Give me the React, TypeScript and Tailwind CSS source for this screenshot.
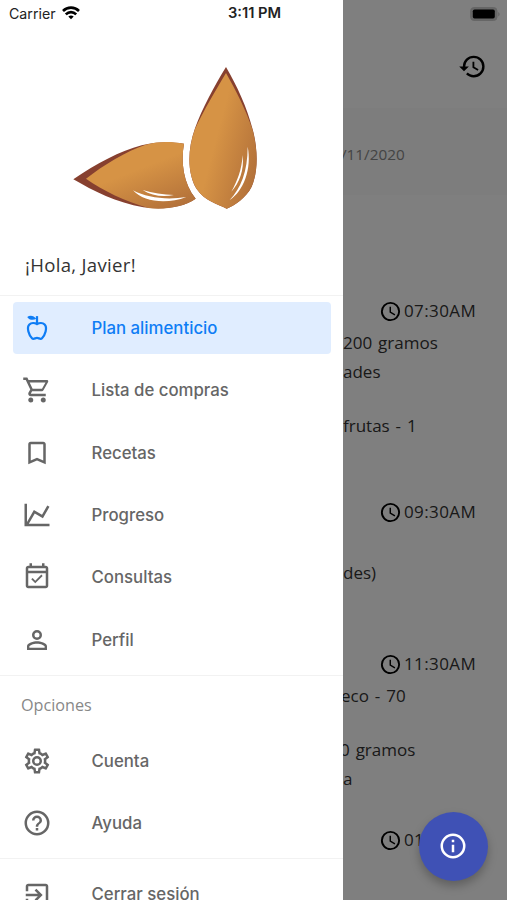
import clsx from "clsx";

const icons = {
  cart: "M17,18A2,2 0 0,1 19,20A2,2 0 0,1 17,22C15.89,22 15,21.1 15,20C15,18.89 15.89,18 17,18M1,2H4.27L5.21,4H20A1,1 0 0,1 21,5C21,5.17 20.95,5.34 20.88,5.5L17.3,11.97C16.96,12.58 16.3,13 15.55,13H8.1L7.2,14.63L7.17,14.75A0.25,0.25 0 0,0 7.42,15H19V17H7C5.89,17 5,16.1 5,15C5,14.65 5.09,14.32 5.24,14.04L6.6,11.59L3,4H1V2M7,18A2,2 0 0,1 9,20A2,2 0 0,1 7,22C5.89,22 5,21.1 5,20C5,18.89 5.89,18 7,18M16,11L18.78,6H6.14L8.5,11H16Z",
  bookmark: "M17,18L12,15.82L7,18V5H17M17,3H7A2,2 0 0,0 5,5V21L12,18L19,21V5C19,3.89 18.1,3 17,3Z",
  chart: "M16,11.78L20.24,4.45L21.97,5.45L16.74,14.5L10.23,10.75L5.46,19H22V21H2V3H4V17.54L9.5,8L16,11.78Z",
  calendar:
    "M19 3H18V1H16V3H8V1H6V3H5C3.9 3 3 3.9 3 5V19C3 20.1 3.9 21 5 21H19C20.1 21 21 20.1 21 19V5C21 3.9 20.1 3 19 3M19 19H5V9H19V19M19 7H5V5H19V7M7.4 13.8L8.5 12.8L10.6 14.9L15.5 10L16.5 11.1L10.6 17L7.4 13.8Z",
  account:
    "M12,4A4,4 0 0,1 16,8A4,4 0 0,1 12,12A4,4 0 0,1 8,8A4,4 0 0,1 12,4M12,6A2,2 0 0,0 10,8A2,2 0 0,0 12,10A2,2 0 0,0 14,8A2,2 0 0,0 12,6M12,13C14.67,13 20,14.33 20,17V20H4V17C4,14.33 9.33,13 12,13M12,14.9C9.03,14.9 5.9,16.36 5.9,17V18.1H18.1V17C18.1,16.36 14.97,14.9 12,14.9Z",
  cog: "M12,8A4,4 0 0,1 16,12A4,4 0 0,1 12,16A4,4 0 0,1 8,12A4,4 0 0,1 12,8M12,10A2,2 0 0,0 10,12A2,2 0 0,0 12,14A2,2 0 0,0 14,12A2,2 0 0,0 12,10M10,22C9.75,22 9.54,21.82 9.5,21.58L9.13,18.93C8.5,18.68 7.96,18.34 7.44,17.94L4.95,18.95C4.73,19.03 4.46,18.95 4.34,18.73L2.34,15.27C2.21,15.05 2.27,14.78 2.46,14.63L4.57,12.97L4.5,12L4.57,11L2.46,9.37C2.27,9.22 2.21,8.95 2.34,8.73L4.34,5.27C4.46,5.05 4.73,4.96 4.95,5.05L7.44,6.05C7.96,5.66 8.5,5.32 9.13,5.07L9.5,2.42C9.54,2.18 9.75,2 10,2H14C14.25,2 14.46,2.18 14.5,2.42L14.87,5.07C15.5,5.32 16.04,5.66 16.56,6.05L19.05,5.05C19.27,4.96 19.54,5.05 19.66,5.27L21.66,8.73C21.79,8.95 21.73,9.22 21.54,9.37L19.43,11L19.5,12L19.43,13L21.54,14.63C21.73,14.78 21.79,15.05 21.66,15.27L19.66,18.73C19.54,18.95 19.27,19.04 19.05,18.95L16.56,17.95C16.04,18.34 15.5,18.68 14.87,18.93L14.5,21.58C14.46,21.82 14.25,22 14,22H10M11.25,4L10.88,6.61C9.68,6.86 8.62,7.5 7.85,8.39L5.44,7.35L4.69,8.65L6.8,10.2C6.4,11.37 6.4,12.64 6.8,13.8L4.68,15.36L5.43,16.66L7.86,15.62C8.63,16.5 9.68,17.14 10.87,17.38L11.24,20H12.76L13.13,17.39C14.32,17.14 15.37,16.5 16.14,15.62L18.57,16.66L19.32,15.36L17.2,13.81C17.6,12.64 17.6,11.37 17.2,10.2L19.31,8.65L18.56,7.35L16.15,8.39C15.38,7.5 14.32,6.86 13.12,6.62L12.75,4H11.25Z",
  help: "M11,18H13V16H11V18M12,2A10,10 0 0,0 2,12A10,10 0 0,0 12,22A10,10 0 0,0 22,12A10,10 0 0,0 12,2M12,20C7.59,20 4,16.41 4,12C4,7.59 7.59,4 12,4C16.41,4 20,7.59 20,12C20,16.41 16.41,20 12,20M12,6A4,4 0 0,0 8,10H10A2,2 0 0,1 12,8A2,2 0 0,1 14,10C14,12 11,11.75 11,15H13C13,12.75 16,12.5 16,10A4,4 0 0,0 12,6Z",
  exit: "M19,3H5C3.89,3 3,3.89 3,5V9H5V5H19V19H5V15H3V19A2,2 0 0,0 5,21H19A2,2 0 0,0 21,19V5C21,3.89 20.1,3 19,3M10.08,15.58L11.5,17L16.5,12L11.5,7L10.08,8.41L12.67,11H3V13H12.67L10.08,15.58Z",
  history:
    "M13.5,8H12V13L16.28,15.54L17,14.33L13.5,12.25V8M13,3A9,9 0 0,0 4,12H1L4.96,16.03L9,12H6A7,7 0 0,1 13,5A7,7 0 0,1 20,12A7,7 0 0,1 13,19C11.07,19 9.32,18.21 8.06,16.94L6.64,18.36C8.22,20 10.5,21 13,21A9,9 0 0,0 22,12A9,9 0 0,0 13,3",
  clock: "M12,20A8,8 0 0,0 20,12A8,8 0 0,0 12,4A8,8 0 0,0 4,12A8,8 0 0,0 12,20M12,2A10,10 0 0,1 22,12A10,10 0 0,1 12,22C6.47,22 2,17.5 2,12A10,10 0 0,1 12,2M12.5,7V12.25L17,14.92L16.25,16.15L11,13V7H12.5Z",
  info: "M11,9H13V7H11M12,20C7.59,20 4,16.41 4,12C4,7.59 7.59,4 12,4C16.41,4 20,7.59 20,12C20,16.41 16.41,20 12,20M12,2A10,10 0 0,0 2,12A10,10 0 0,0 12,22A10,10 0 0,0 22,12A10,10 0 0,0 12,2M11,17H13V11H11V17Z",
};

type IconName = keyof typeof icons;

function Icon({ name, className }: { name: IconName; className?: string }) {
  return (
    <svg viewBox="0 0 24 24" fill="currentColor" className={clsx("shrink-0", className)}>
      <path d={icons[name]} />
    </svg>
  );
}

function AppleIcon() {
  return (
    <svg viewBox="0 0 24 24" className="size-[30px] shrink-0" fill="none" stroke="currentColor" strokeWidth="1.8">
      <path d="M12 8.9C10.2 7.8 7.4 7.7 5.9 9.2C3.4 11.8 5.6 17.8 8 20.2C9.2 21.4 10.6 19.9 12 19.9C13.4 19.9 14.8 21.4 16 20.2C18.4 17.8 20.6 11.8 18.1 9.2C16.6 7.7 13.8 7.8 12 8.9Z" />
      <path d="M12 9V2.5" />
      <path d="M11.4 4.6C9 6 5.6 5.6 4.2 3.1C6.4 1.4 9.4 1.9 11.4 4.6Z" fill="currentColor" stroke="none" />
    </svg>
  );
}

function Logo() {
  return (
    <svg viewBox="0 0 630 495" className="h-[165px] w-[210px]">
      <defs>
        <linearGradient id="nutLeft" x1="0.3" y1="0.1" x2="0.85" y2="0.95">
          <stop offset="0.35" stopColor="#d69345" />
          <stop offset="1" stopColor="#b4723a" />
        </linearGradient>
        <linearGradient id="nutRight" x1="0.2" y1="0.4" x2="0.95" y2="0.8">
          <stop offset="0.25" stopColor="#d69345" />
          <stop offset="1" stopColor="#b4723a" />
        </linearGradient>
      </defs>
      <path
        d="M40 373C110 325 180 288 245 271C290 259 330 260 372 266C362 322 370 385 407 431C370 457 310 465 250 457C170 443 100 408 40 373Z"
        fill="#87402f"
      />
      <path
        d="M78 371C130 330 200 288 257 269C300 258 335 260 372 266C362 322 370 385 407 431C370 457 310 465 265 459C195 438 130 408 78 371Z"
        fill="url(#nutLeft)"
      />
      <path
        d="M498 36C461 96 427 160 405 220C380 290 384 360 410 402C435 440 475 447 500 461C525 450 557 430 575 395C597 345 592 270 577 220C562 160 531 92 498 36Z"
        fill="#87402f"
      />
      <path
        d="M498 54C466 108 431 166 405 222C380 290 384 360 410 402C435 440 475 447 500 461C525 450 557 430 575 395C597 345 592 275 577 222C558 166 528 107 498 54Z"
        fill="url(#nutRight)"
      />
      <g fill="#fff">
        <path d="M219 406C250 441 320 449 379 426C325 435 262 430 219 406Z" />
        <path d="M248 405C275 423 310 427 342 420C310 418 277 415 248 405Z" />
        <path d="M563 275C576 340 551 408 509 435C542 400 563 350 563 275Z" />
        <path d="M548 300C553 345 538 385 514 410C532 378 545 345 548 300Z" />
      </g>
    </svg>
  );
}

function StatusBar() {
  return (
    <div className="absolute inset-x-0 top-0 flex h-[27px] items-center justify-between pr-[7px] pl-[9px] font-['Inter',sans-serif] text-[14.2px] text-[#222]">
      <div className="flex w-[180px] items-center gap-1.5">
        <span>Carrier</span>
        <svg viewBox="0 0 18 14" className="h-3.5 w-[18px]" fill="none" stroke="#000" strokeWidth="2.6">
          <path d="M1 5C5.5 0.5 12.5 0.5 17 5" />
          <path d="M3.8 8.4C6.8 5.4 11.2 5.4 14.2 8.4" />
          <path d="M6.3 10.6C8 9.2 10 9.2 11.7 10.6L9 13.2Z" fill="#000" stroke="none" />
        </svg>
      </div>
      <span className="text-[14.7px] font-semibold">3:11 PM</span>
      <div className="flex w-[180px] justify-end">
        <svg viewBox="0 0 30 14" className="h-3.5 w-[30px]">
          <rect x="0.6" y="0.5" width="26.4" height="13" rx="3.5" fill="#666" stroke="#666" />
          <rect x="2.8" y="2.5" width="22" height="9" rx="1.8" fill="#000" />
          <path d="M28.3 5V9.4C30 8.6 30 5.8 28.3 5Z" fill="#606060" />
        </svg>
      </div>
    </div>
  );
}

function MenuItem({ label, icon, active }: { label: string; icon?: IconName; active?: boolean }) {
  return (
    <li
      className={clsx(
        "mr-3 ml-[13px] flex h-[52.3px] items-center gap-[39.5px] rounded pl-[9px]",
        active ? "bg-[#e0edff] text-[#0f7df5]" : "text-[#666]"
      )}
    >
      {icon ? <Icon name={icon} className="size-[30px]" /> : <AppleIcon />}
      <span className="pt-px whitespace-nowrap">{label}</span>
    </li>
  );
}

const mainItems: { label: string; icon?: IconName; active?: boolean }[] = [
  { label: "Plan alimenticio", active: true },
  { label: "Lista de compras", icon: "cart" },
  { label: "Recetas", icon: "bookmark" },
  { label: "Progreso", icon: "chart" },
  { label: "Consultas", icon: "calendar" },
  { label: "Perfil", icon: "account" },
];

function Drawer() {
  return (
    <aside className="absolute inset-y-0 left-0 w-[343px] overflow-hidden bg-white font-['Inter',sans-serif] text-[16.8px] font-medium">
      <div className="pt-[55px] pl-[60px]">
        <Logo />
      </div>
      <p className="mt-[30px] pl-[25px] font-['Open_Sans',sans-serif] text-[18.6px] leading-[30px] font-normal tracking-[0.3px] text-[#333]">
        ¡Hola, Javier!
      </p>
      <ul className="mt-[15px] flex flex-col gap-2.5 border-t border-[#f2f2f2] pt-[6px] pb-[9px]">
        {mainItems.map((item) => (
          <MenuItem key={item.label} {...item} />
        ))}
      </ul>
      <div className="border-t border-[#f2f2f2] pt-[14px]">
        <p className="pl-[21px] font-['Open_Sans',sans-serif] text-[16.2px] leading-[30px] font-normal text-[#888]">
          Opciones
        </p>
        <ul className="mt-[15px] flex flex-col gap-2.5 pb-[9px]">
          <MenuItem label="Cuenta" icon="cog" />
          <MenuItem label="Ayuda" icon="help" />
        </ul>
      </div>
      <ul className="border-t border-[#f2f2f2] pt-[9px]">
        <MenuItem label="Cerrar sesión" icon="exit" />
      </ul>
    </aside>
  );
}

function MealTime({ time }: { time: string }) {
  return (
    <div className="flex h-[30px] items-center gap-[2.5px] pl-[35.5px]">
      <Icon name="clock" className="size-[23px] text-black" />
      <span className="tracking-[0.4px]">{time}</span>
    </div>
  );
}

function MealPlan() {
  return (
    <main className="h-full bg-white font-['Open_Sans',sans-serif] text-[17px] leading-[30px] text-[#333]">
      <header className="flex h-[108px] items-end justify-end pr-5 pb-[27px]">
        <Icon name="history" className="size-[29px] text-black" />
      </header>
      <div className="flex h-[87px] items-center bg-[#fafafa] pt-[5px] pl-[341px] text-[15.3px] text-[#888]">
        /11/2020
      </div>
      <div className="pt-[101px] pl-[343px] [word-spacing:1.5px] whitespace-nowrap">
        <section className="h-[201px]">
          <MealTime time="07:30AM" />
          <p className="pt-[2px]">200 gramos</p>
          <p className="-mt-px">ades</p>
          <p className="mt-6">frutas - 1</p>
        </section>
        <section className="h-[152px]">
          <MealTime time="09:30AM" />
          <p className="mt-[31px]">des)</p>
        </section>
        <section className="h-[176px]">
          <MealTime time="11:30AM" />
          <p className="-ml-[2px] pt-[2px]">eco - 70</p>
          <p className="mt-6 -ml-[3px]">0 gramos</p>
          <p className="-mt-px">a</p>
        </section>
        <MealTime time="01:30PM" />
      </div>
    </main>
  );
}

export default function App() {
  return (
    <div className="relative h-[900px] w-[507px] overflow-hidden">
      <MealPlan />
      <div className="absolute inset-0 bg-black/50" />
      <button className="absolute right-[19.5px] bottom-[19.5px] flex size-[68.5px] items-center justify-center rounded-full bg-[#3f51b5] text-white shadow-[0_5px_10px_rgba(0,0,0,0.25)]">
        <Icon name="info" className="size-[30px]" />
      </button>
      <Drawer />
      <StatusBar />
    </div>
  );
}
